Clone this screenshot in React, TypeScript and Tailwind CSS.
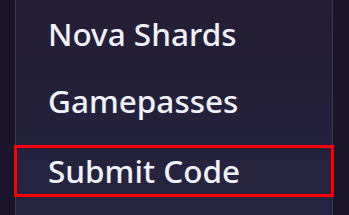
const items = ['Nova Shards', 'Gamepasses'];

export default function App() {
  return (
    <div className="flex h-[215px] w-[349px] overflow-hidden bg-[#1a1529]" style={{ fontFamily: '"Noto Sans", sans-serif' }}>
      <div className="w-[15px] shrink-0" />
      <div className="flex w-[318px] shrink-0 flex-col border-x border-[#3a3550] bg-gradient-to-b from-[#241d36] to-[#252440]">
        {items.map((label) => (
          <div key={label} className="flex h-[67px] items-center pl-[32px] text-[31.5px] font-medium leading-none text-[#eef2fa]">
            {label}
          </div>
        ))}
        <div className="-mx-[2px] mt-[11px] flex h-[52px] items-center border-[3px] border-[#ff0000] pl-[31px] text-[31.5px] font-medium leading-none text-[#eef2fa]">
          Submit Code
        </div>
      </div>
      <div className="flex-1" />
    </div>
  );
}
